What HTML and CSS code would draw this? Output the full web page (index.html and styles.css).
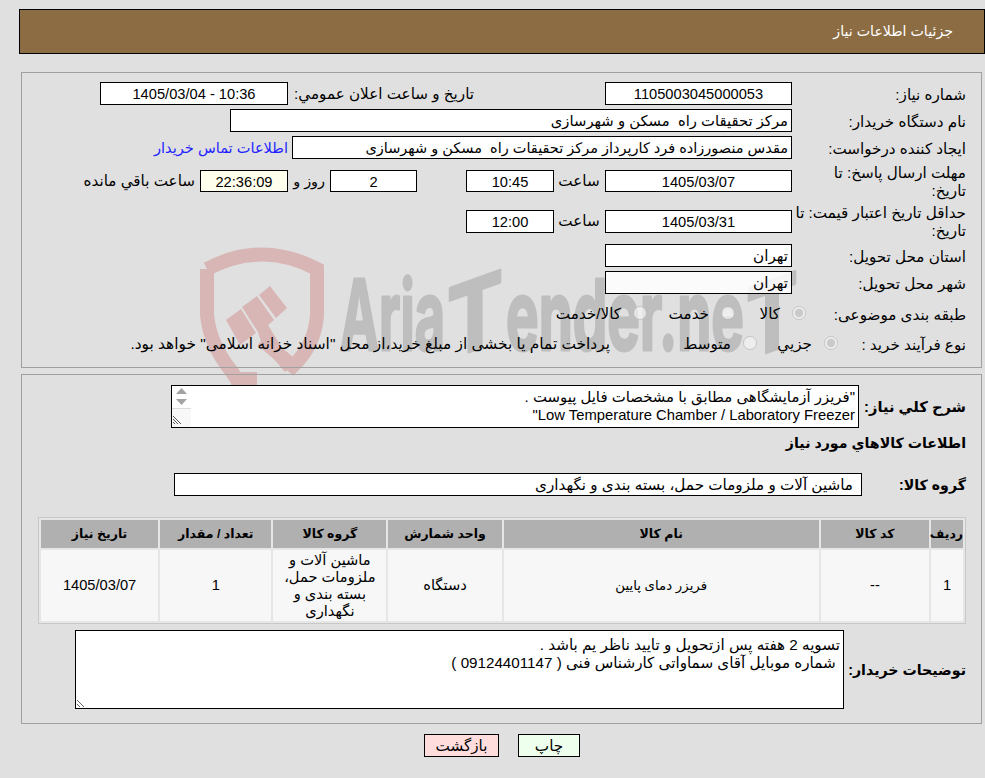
FILE: index.html
```html
<!DOCTYPE html>
<html lang="fa" dir="rtl">
<head>
    <meta charset="UTF-8">
    <title>جزئیات اطلاعات نیاز</title>
    <link rel="stylesheet" href="styles.css">
</head>
<body>
    <svg class="watermark" width="985" height="420" viewBox="0 0 985 420">
        <g fill="none" stroke="#d9b6b6" stroke-width="14">
            <path d="M207 269 Q262 240 317 269 L317 315 Q315 345 293 366 L262 340"/>
            <path d="M207 269 L207 315 Q210 345 232 372 L245 392"/>
        </g>
        <g fill="#d9b6b6">
            <path d="M226 320 L241 309 L256 333 L240 345 Z"/>
            <path d="M242 307 L257 296 L274 320 L268 325 L293 366 L285 372 L262 345 L258 332 Z"/>
            <path d="M259 295 L270 286 L287 308 L276 318 Z"/>
            <path d="M231 372 L257 372 L257 392 L231 392 Z"/>
        </g>
        <text class="watermark-text" x="340" y="350" textLength="105" lengthAdjust="spacingAndGlyphs">Aria</text>
        <text class="watermark-text" transform="translate(447 360) skewY(-20)" textLength="56" lengthAdjust="spacingAndGlyphs">T</text>
        <text class="watermark-text" x="506" y="350" textLength="238" lengthAdjust="spacingAndGlyphs">ender.ne</text>
        <text class="watermark-text" transform="translate(746 360) skewY(-20)" textLength="52" lengthAdjust="spacingAndGlyphs">T</text>
    </svg>

    <div class="page-title">جزئیات اطلاعات نیاز</div>

    <div class="panel details">
        <div class="row">
            <div class="label">شماره نیاز:</div>
            <div class="field date-field center">1105003045000053</div>
            <div class="label-inline announce">تاریخ و ساعت اعلان عمومي:</div>
            <div class="field announce-field center" dir="ltr">1405/03/04 - 10:36</div>
        </div>
        <div class="row">
            <div class="label">نام دستگاه خریدار:</div>
            <div class="field buyer-field">مرکز تحقیقات راه &nbsp;مسکن و شهرسازی</div>
        </div>
        <div class="row">
            <div class="label">ایجاد کننده درخواست:</div>
            <div class="field creator-field">مقدس منصورزاده فرد کارپرداز مرکز تحقیقات راه &nbsp;مسکن و شهرسازی</div>
            <a class="contact-link" href="#">اطلاعات تماس خریدار</a>
        </div>
        <div class="row tall">
            <div class="label">مهلت ارسال پاسخ: تا<br>تاریخ:</div>
            <div class="field date-field center short">1405/03/07</div>
            <div class="label-inline hour">ساعت</div>
            <div class="field time-field center short" dir="ltr">10:45</div>
            <div class="field days-field center short">2</div>
            <div class="label-inline day">روز و</div>
            <div class="field clock-field center short" dir="ltr">22:36:09</div>
            <div class="label-inline">ساعت باقي مانده</div>
        </div>
        <div class="row tall second-date">
            <div class="label">حداقل تاریخ اعتبار قیمت: تا<br>تاریخ:</div>
            <div class="field date-field center">1405/03/31</div>
            <div class="label-inline hour">ساعت</div>
            <div class="field time-field center" dir="ltr">12:00</div>
        </div>
        <div class="row">
            <div class="label">استان محل تحویل:</div>
            <div class="field date-field">تهران</div>
        </div>
        <div class="row">
            <div class="label">شهر محل تحویل:</div>
            <div class="field date-field see-through">تهران</div>
        </div>
        <div class="row choice-row subject">
            <div class="label">طبقه بندی موضوعی:</div>
            <label class="choice goods"><input type="radio" name="subject" checked disabled>کالا</label>
            <label class="choice service"><input type="radio" name="subject" disabled>خدمت</label>
            <label class="choice"><input type="radio" name="subject" disabled>کالا/خدمت</label>
        </div>
        <div class="row choice-row process">
            <div class="label">نوع فرآیند خرید :</div>
            <label class="choice minor"><input type="radio" name="process" checked disabled>جزيي</label>
            <label class="choice medium"><input type="radio" name="process" disabled>متوسط</label>
            <div class="pay-note">پرداخت تمام یا بخشی از مبلغ خرید،از محل "اسناد خزانه اسلامی" خواهد بود.</div>
        </div>
    </div>

    <div class="panel goods-panel">
        <div class="row summary-row">
            <div class="label-strong">شرح كلي نياز:</div>
            <div class="box summary-box">
                <div>"فریزر آزمایشگاهی مطابق با مشخصات فایل پیوست .</div>
                <div class="latin-line">Low Temperature Chamber / Laboratory Freezer"</div>
                <svg class="scroll-ctl" width="19" height="41" viewBox="0 0 19 41">
                    <rect x="0" y="0" width="19" height="41" fill="#fff"/>
                    <rect x="0" y="23" width="19" height="18" fill="#f8f8f8"/>
                    <path d="M0 22.5H19" stroke="#dcdcdc"/>
                    <path d="M9.5 2 L15 8 H4 Z M4 13 H15 L9.5 19 Z" fill="#a3a3a3"/>
                    <path d="M1 30 L9 38 M1 33 L6 38 M1 36 L3 38" stroke="#555" fill="none"/>
                </svg>
            </div>
        </div>
        <div class="section-title">اطلاعات كالاهاي مورد نياز</div>
        <div class="row group-row">
            <div class="label-strong">گروه كالا:</div>
            <div class="field group-field">ماشین آلات و ملزومات حمل، بسته بندی و نگهداری</div>
        </div>
        <table class="goods-table">
            <colgroup>
                <col class="c-row">
                <col class="c-code">
                <col class="c-name">
                <col class="c-unit">
                <col class="c-group">
                <col class="c-qty">
                <col class="c-date">
            </colgroup>
            <thead>
                <tr>
                    <th>ردیف</th>
                    <th>کد کالا</th>
                    <th>نام کالا</th>
                    <th>واحد شمارش</th>
                    <th>گروه کالا</th>
                    <th>تعداد / مقدار</th>
                    <th>تاریخ نیاز</th>
                </tr>
            </thead>
            <tbody>
                <tr>
                    <td>1</td>
                    <td>--</td>
                    <td class="name-cell">فریزر دمای پایین</td>
                    <td>دستگاه</td>
                    <td>ماشین آلات و ملزومات حمل، بسته بندی و نگهداری</td>
                    <td>1</td>
                    <td>1405/03/07</td>
                </tr>
            </tbody>
        </table>
        <div class="row notes-row">
            <div class="label-strong">توضیحات خریدار:</div>
            <textarea class="box notes-box" readonly>تسویه 2 هفته پس ازتحویل و تایید ناظر یم باشد .
 شماره موبایل آقای سماواتی کارشناس فنی ( 09124401147 )</textarea>
        </div>
    </div>

    <div class="actions">
        <button class="btn print-btn" type="button">چاپ</button>
        <button class="btn back-btn" type="button">بازگشت</button>
    </div>
</body>
</html>
```

FILE: styles.css
```css
html, body {
    margin: 0;
    height: 778px;
    overflow: hidden;
}

body {
    position: relative;
    background: #e0e0e0;
    color: #000;
    font-family: "Liberation Sans", "DejaVu Sans", sans-serif;
    font-size: 15.2px;
    line-height: 18px;
    padding: 9px 0 0 19px;
    box-sizing: border-box;
}

.watermark {
    position: absolute;
    left: 0;
    top: 0;
    direction: ltr;
}

.watermark-text {
    fill: #bebebe;
    stroke: #bebebe;
    stroke-width: 3px;
    stroke-linejoin: round;
    font-family: "Inter", "Liberation Sans", sans-serif;
    font-weight: 700;
    font-size: 97px;
}

.page-title {
    position: relative;
    height: 43px;
    line-height: 43px;
    padding-right: 31px;
    background: #8c6c42;
    border: 1px solid #000;
    color: #fff;
    font-size: 14.2px;
}

.panel {
    position: relative;
    border: 1px solid #a0a0a0;
    margin-left: 2px;
    margin-right: 3px;
    box-sizing: border-box;
}

.details {
    height: 296px;
    margin-top: 18px;
    padding: 9px 15px 0 0;
}

.goods-panel {
    height: 350px;
    margin-top: 6px;
    padding: 10px 15px 0 0;
}

.row {
    display: flex;
    align-items: center;
    margin-bottom: 4px;
}

.row.tall {
    height: 36px;
    margin-bottom: 4px;
}

.row.second-date {
    margin-bottom: 5px;
}

.label {
    width: 174px;
    flex: none;
    padding-top: 2px;
    box-sizing: border-box;
}

.label-inline {
    flex: none;
    margin-right: 5px;
    white-space: nowrap;
}

.label-strong {
    flex: none;
    font-size: 14.2px;
    font-weight: bold;
}

.summary-row .label-strong {
    width: 107px;
    font-size: 14.67px;
}

.field {
    flex: none;
    height: 23px;
    line-height: 22px;
    box-sizing: border-box;
    border: 1px solid #000;
    background: #fff;
    padding: 0 3px;
    white-space: nowrap;
    overflow: hidden;
}

.field.short {
    height: 22px;
}

.center {
    font-size: 14.67px;
    text-align: center;
}

.see-through {
    background: rgba(255, 255, 255, 0.85);
}

.date-field {
    width: 187px;
}

.announce {
    width: 181px;
    margin-right: 131px;
}

.announce-field {
    width: 188px;
    margin-right: 5px;
}

.buyer-field {
    width: 562px;
    font-size: 14.8px;
}

.creator-field {
    width: 500px;
    font-size: 14.5px;
}

.contact-link {
    margin-right: 4px;
    color: #1f1fff;
    font-size: 14.6px;
    text-decoration: none;
}

.hour {
    width: 42px;
    text-align: center;
}

.time-field {
    width: 88px;
    margin-right: 4px;
}

.days-field {
    width: 87px;
    margin-right: 49px;
}

.day {
    width: 28px;
    font-size: 14.4px;
}

.clock-field {
    width: 88px;
    margin-right: 9px;
    background: #ffffee;
}

.choice-row {
    height: 26px;
}

.subject {
    margin-top: 7px;
}

.subject .label {
    width: 160px;
}

.choice {
    display: flex;
    align-items: center;
    flex: none;
}

.choice input {
    width: 14px;
    height: 14px;
    margin: 0 0 3px 12px;
}

.goods {
    width: 71px;
}

.service {
    width: 88px;
}

.minor {
    width: 81px;
}

.medium {
    width: 147px;
}

.process .label {
    width: 128px;
}

.pay-note {
    flex: none;
    font-size: 15.4px;
}

.box {
    display: block;
    box-sizing: border-box;
    border: 1px solid #000;
    background: #fff;
    margin: 0;
    font: inherit;
    color: inherit;
    outline: none;
}

.summary-row {
    margin-bottom: 6px;
}

.summary-box {
    position: relative;
    width: 688px;
    height: 43px;
    padding: 2px 3px;
    font-size: 14.9px;
}

.latin-line {
    font-size: 14.8px;
}

.scroll-ctl {
    position: absolute;
    left: 0;
    top: 0;
}

.section-title {
    font-size: 14.2px;
    font-weight: bold;
    height: 18px;
    margin-bottom: 21px;
}

.group-row .label-strong {
    width: 104px;
}

.group-field {
    width: 688px;
    padding-right: 8px;
}

.goods-table {
    width: 928px;
    border: 1px solid #c8c8c8;
    border-spacing: 2px;
    table-layout: fixed;
    margin: 21px 0 6px;
    box-sizing: border-box;
    background: #e6e6e6;
    font-size: 14.67px;
}

.goods-table th {
    height: 28px;
    padding: 0;
    background: #b0b0b0;
    font-size: 12.5px;
}

.goods-table td {
    height: 71px;
    padding: 0 4px;
    background: #f7f7f7;
    text-align: center;
    line-height: 17px;
}

.goods-table td.name-cell {
    font-size: 13.33px;
}

.c-row { width: 32px; }
.c-code { width: 108px; }
.c-name { width: 315px; }
.c-unit { width: 113px; }
.c-group { width: 113px; }
.c-qty { width: 111px; }
.c-date { width: 117px; }

.notes-row .label-strong {
    width: 122px;
}

.notes-box {
    width: 769px;
    height: 79px;
    padding: 5px 3px;
    resize: both;
    overflow: auto;
}

.actions {
    display: flex;
    justify-content: center;
    gap: 19px;
    margin-top: 10px;
}

.btn {
    height: 23px;
    padding: 0;
    border: 1px solid #000;
    font: inherit;
    color: #000;
}

.print-btn {
    width: 62px;
    background: #eeffee;
}

.back-btn {
    width: 75px;
    background: #ffdddd;
}
```
